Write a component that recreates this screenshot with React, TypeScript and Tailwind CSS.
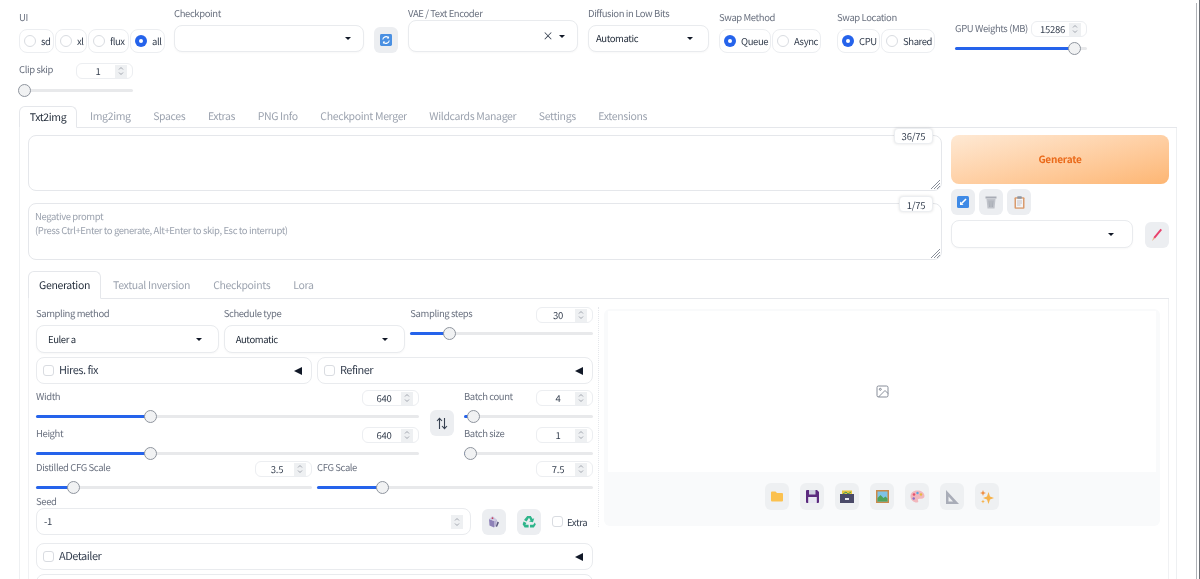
import React from "react";

const FONT = "font-['Noto_Sans_CJK_SC','Lato',sans-serif] [text-rendering:geometricPrecision]";

function Label({ children, className = "" }: { children: React.ReactNode; className?: string }) {
  return <div className={`text-[9.5px] tracking-[-0.4px] leading-[14px] text-[#6b7280] whitespace-nowrap h-[14px] ${className}`}>{children}</div>;
}

function Caret() {
  return <span className="w-0 h-0 border-x-[3.5px] border-x-transparent border-t-[3.5px] border-t-[#111827] shrink-0" />;
}

function Select({ text, className = "", pad = "px-3", clear = false }: { text?: string; className?: string; pad?: string; clear?: boolean }) {
  return (
    <div className={`flex items-center justify-between rounded-lg border border-[#e9ebee] bg-white ${pad} text-[9.5px] tracking-[-0.4px] text-[#1f2937] shadow-[0_1px_2px_rgba(0,0,0,0.03)] ${className}`}>
      <span>{text}</span>
      <span className="flex items-center gap-[6px]">
        {clear && <span className="text-[11px] leading-none text-[#374151]">×</span>}
        <Caret />
      </span>
    </div>
  );
}

function Radio({ label, on = false, className = "" }: { label: string; on?: boolean; className?: string }) {
  return (
    <div className={`flex items-center gap-[5px] h-[24px] pl-[4px] rounded-lg border border-[#eceef1] bg-white ${className}`}>
      <span className={`w-[12px] h-[12px] rounded-full flex items-center justify-center shrink-0 ${on ? "bg-[#2563eb]" : "border border-[#d9dce1] bg-white"}`}>
        {on && <span className="w-[4px] h-[4px] rounded-full bg-white" />}
      </span>
      <span className="text-[9.5px] tracking-[-0.4px] text-[#374151] pt-[1px]">{label}</span>
    </div>
  );
}

function Num({ value, className = "w-[57px]" }: { value: string; className?: string }) {
  return (
    <div className={`h-[16px] flex items-center rounded-md border border-[#eceef1] bg-white shrink-0 ${className}`}>
      <span className="flex-1 text-center pl-[4px] text-[9.5px] tracking-[-0.3px] text-[#374151] pt-[1px]">{value}</span>
      <span className="w-[12px] h-[13px] mr-[5px] bg-[#eef0f2] flex items-center justify-center">
        <Spin />
      </span>
    </div>
  );
}

function Spin() {
  return (
    <svg width="6" height="10" viewBox="0 0 6 10" fill="none" stroke="#8b919a" strokeWidth="0.8">
      <path d="M1 3.500 3 1.500 5 3.500M1 6.500 3 8.500 5 6.500" />
    </svg>
  );
}

function Slider({ pos, className = "" }: { pos: number; className?: string }) {
  return (
    <div className={`relative h-[3px] bg-[#e8e9eb] rounded ${className}`}>
      <div className="absolute left-0 top-0 h-[3px] bg-[#2563eb] rounded" style={{ width: pos }} />
      <div className="absolute top-[-5px] w-[13px] h-[13px] rounded-full border border-[#8f959e] bg-[#f1f2f3]" style={{ left: pos - 6.5 }} />
    </div>
  );
}

function SliderField({ label, value, pos, className = "", gap = "mt-[9px]" }: { label: string; value: string; pos: number; className?: string; gap?: string }) {
  return (
    <div className={className}>
      <div className="flex items-start justify-between h-[16px]">
        <Label className="-mt-[1px]">{label}</Label>
        <Num value={value} />
      </div>
      <Slider pos={pos} className={gap} />
    </div>
  );
}

function IconBtn({ children, className = "" }: { children: React.ReactNode; className?: string }) {
  return <div className={`w-[24px] h-[26px] rounded-md bg-[#eceef1] flex items-center justify-center shrink-0 ${className}`}>{children}</div>;
}

function Check({ className = "" }: { className?: string }) {
  return <span className={`w-[11px] h-[11px] rounded-[3px] border border-[#d9dce1] bg-white shrink-0 ${className}`} />;
}

function Accordion({ label, className = "" }: { label: string; className?: string }) {
  return (
    <div className={`h-[27px] flex items-center rounded-lg border border-[#e9ebee] bg-white pl-[6px] pr-[9px] ${className}`}>
      <Check />
      <span className="ml-[5px] text-[11px] tracking-[-0.5px] text-[#374151] flex-1 pb-[1px]">{label}</span>
      <span className="w-0 h-0 border-y-[4.5px] border-y-transparent border-r-[8px] border-r-[#111827]" />
    </div>
  );
}

const RefreshIcon = () => (
  <svg width="12" height="12" viewBox="0 0 13 13">
    <rect width="13" height="13" rx="1.500" fill="#4a90e2" />
    <path d="M3 6a3.500 3.500 0 0 1 6-2M10 7a3.500 3.500 0 0 1-6 2" fill="none" stroke="#fff" strokeWidth="1.200" />
    <path d="M9.800 2.200v2.600H7.200zM3.200 10.800V8.200h2.600z" fill="#fff" />
  </svg>
);
const ArrowBoxIcon = () => (
  <svg width="12" height="12" viewBox="0 0 12 12">
    <rect width="12" height="12" rx="1.500" fill="#3f8ae6" />
    <path d="M9 3 4.500 7.500" stroke="#fff" strokeWidth="1.600" />
    <path d="M3 5.500V9h3.500z" fill="#fff" />
  </svg>
);
const TrashIcon = () => (
  <svg width="12" height="13" viewBox="0 0 12 13">
    <rect x="0.500" y="0.500" width="11" height="2" fill="#a8acb5" />
    <path d="M1.500 3h9l-1 9.500h-7z" fill="#c0c3ca" />
    <path d="M4 4.500 4.500 11M6 4.500V11M8 4.500 7.500 11" stroke="#9ea3ac" strokeWidth="0.700" />
  </svg>
);
const ClipboardIcon = () => (
  <svg width="11" height="13" viewBox="0 0 11 13">
    <rect x="0.500" y="1.200" width="10" height="11.500" rx="1" fill="#d99a6c" />
    <rect x="2" y="2.600" width="7" height="8.800" fill="#f3f4f6" />
    <rect x="3.200" y="0.300" width="4.600" height="2.400" rx="0.600" fill="#8d96a3" />
    <path d="M3 5h5M3 7h5M3 9h3.500" stroke="#b2aeb4" strokeWidth="0.700" />
  </svg>
);
const PencilIcon = () => (
  <svg width="12" height="14" viewBox="0 0 12 14">
    <path d="M9.500 0.800 11 2 4 10.500 2.500 9.300z" fill="#e8416b" />
    <path d="M2.500 9.300 4 10.500 1 13z" fill="#eab08a" />
  </svg>
);
const SwapIcon = () => (
  <svg width="12" height="13" viewBox="0 0 12 13" fill="none" stroke="#374151" strokeWidth="1.100">
    <path d="M3.500 12V1.500M1 4l2.500-2.700L6 4M8.500 1v10.500M6 9l2.500 2.700L11 9" />
  </svg>
);
const DiceIcon = () => (
  <svg width="12" height="13" viewBox="0 0 12 13">
    <path d="M1 4 6 6v6.500L1.500 10.500z" fill="#8e82b8" />
    <path d="M6 6 9 4.800 8 11 6 12.500z" fill="#b9b2d4" />
    <path d="M1 4 4.500 1 9 4.800 6 6z" fill="#cfc9e2" />
    <circle cx="4.500" cy="3.200" r="0.900" fill="#c2415d" />
    <path d="M9.500 6.500 11 7.500 9 12 7.800 11.200z" fill="#5d5a80" />
  </svg>
);
const RecycleIcon = () => (
  <svg width="14" height="13" viewBox="0 0 14 13">
    <path d="M5.200 1 8.800 1 10.600 4 12.200 3.200 11 7.200 7 6.400 8.600 5.400 7 2.800 4.600 6.600 2 5z" fill="#2fb58b" />
    <path d="M1.600 6.400 4.400 8 3.400 9.800H6.600V12.400H2.600L0.600 9.200z" fill="#2fb58b" />
    <path d="M12.800 7.400 13.800 9.400 11.800 12.400H8V9.800H11.200z" fill="#2fb58b" />
  </svg>
);
const FolderIcon = () => (
  <svg width="12" height="11" viewBox="0 0 12 11">
    <path d="M0 1.500Q0 .5 1 .5H4.500L6 2H11Q12 2 12 3V9.500Q12 10.500 11 10.500H1Q0 10.500 0 9.500z" fill="#fbc14f" />
  </svg>
);
const FloppyIcon = () => (
  <svg width="13" height="13" viewBox="0 0 13 13">
    <path d="M0 1Q0 0 1 0H11L13 2V12Q13 13 12 13H1Q0 13 0 12z" fill="#5b2a7e" />
    <rect x="3" y="0" width="6.500" height="4.500" fill="#cfd0e0" />
    <rect x="2.200" y="7" width="8.600" height="6" fill="#e8e8f2" />
  </svg>
);
const BoxIcon = () => (
  <svg width="14" height="13" viewBox="0 0 14 13">
    <rect x="2" y="0.500" width="10" height="5" fill="#e6c43d" />
    <path d="M3 4 6 2l2 2 3-2" stroke="#4a9b57" fill="none" />
    <rect x="0" y="4" width="14" height="9" fill="#4a4a68" />
    <rect x="5" y="8" width="4" height="2" fill="#e8e8f0" />
  </svg>
);
const PictureIcon = () => (
  <svg width="13" height="13" viewBox="0 0 13 13">
    <rect width="13" height="13" fill="#c98a4b" />
    <rect x="1.500" y="1.500" width="10" height="10" fill="#7ec3e6" />
    <path d="M1.500 11.500V8l3-3 3 3 2-1.500 2 2v3z" fill="#4ea35a" />
  </svg>
);
const PaletteIcon = () => (
  <svg width="15" height="13" viewBox="0 0 15 13">
    <path d="M7.500 0.500C3 .5.500 3 .5 6.500S3.500 12.500 7 12.500c1.500 0 1.500-1.300 1-2-.5-1 .2-1.800 1.500-1.800h2c1.500 0 3-1 3-2.700C14.500 2.500 11 .5 7.500.5z" fill="#f1b7bd" />
    <circle cx="4" cy="4.500" r="1.300" fill="#e7506c" />
    <circle cx="7.500" cy="3" r="1.200" fill="#58a8e0" />
    <circle cx="11" cy="4.500" r="1.200" fill="#e8b940" />
    <circle cx="3.700" cy="8.500" r="1.200" fill="#8d6cc8" />
  </svg>
);
const RulerIcon = () => (
  <svg width="13" height="14" viewBox="0 0 13 14">
    <path fillRule="evenodd" d="M0 0 13 14H0zM2.500 6.500V11.500H7z" fill="#a9adb8" />
  </svg>
);
const SparkleIcon = () => (
  <svg width="14" height="14" viewBox="0 0 14 14">
    <path d="M8.500 2 10 6.500 14 8 10 9.500 8.500 14 7 9.500 3 8 7 6.500z" fill="#f6b24b" />
    <path d="M3 0l.8 2.200L6 3 3.800 3.800 3 6 2.200 3.800 0 3l2.200-.8z" fill="#f08a3c" />
    <path d="M3 9.500l.6 1.400 1.400.6-1.400.6L3 13.500l-.6-1.400-1.400-.6 1.400-.6z" fill="#f6b24b" />
  </svg>
);

const mainTabs = ["Img2img", "Spaces", "Extras", "PNG Info", "Checkpoint Merger", "Wildcards Manager", "Settings", "Extensions"];

export default function App() {
  return (
    <div className={`${FONT} w-[1200px] h-[579px] overflow-hidden bg-white relative blur-[0.3px]`}>
      <div className="absolute right-[3px] top-[3px] bottom-0 w-[1px] bg-[#b0b3b8]" />
      <div className="absolute right-0 top-0 bottom-0 w-[1px] bg-[#6b6f75]" />
      {/* top settings */}
      <div className="h-[106px] pl-[19px] flex items-start">
        <div className="w-[155px]">
          <Label className="mt-[10px]">UI</Label>
          <div className="flex gap-[1px] mt-[5px]">
            <Radio label="sd" className="w-[35px]" />
            <Radio label="xl" className="w-[32px]" />
            <Radio label="flux" className="w-[41px]" />
            <Radio label="all" on className="w-[35px]" />
          </div>
          <div className="w-[114px] mt-[10px]">
            <div className="flex items-start justify-between h-[16px]">
              <Label className="-mt-[1px]">Clip skip</Label>
              <Num value="1" />
            </div>
            <Slider pos={5} className="mt-[10px]" />
          </div>
        </div>
        <div className="w-[190px]">
          <Label className="mt-[6px]">Checkpoint</Label>
          <Select className="h-[27px] mt-[5px]" />
        </div>
        <IconBtn className="ml-[10px] mt-[27px]"><RefreshIcon /></IconBtn>
        <div className="w-[170px] ml-[10px]">
          <Label className="mt-[6px]">VAE / Text Encoder</Label>
          <Select clear className="h-[32px]" />
        </div>
        <div className="w-[121px] ml-[10px]">
          <Label className="mt-[6px]">Diffusion in Low Bits</Label>
          <Select text="Automatic" className="h-[27px] mt-[5px]" pad="px-[7px] pr-[15px]" />
        </div>
        <div className="ml-[10px]">
          <Label className="mt-[10px]">Swap Method</Label>
          <div className="flex gap-[1px] mt-[5px]">
            <Radio label="Queue" on className="w-[52px]" />
            <Radio label="Async" className="w-[49px]" />
          </div>
        </div>
        <div className="ml-[16px]">
          <Label className="mt-[10px]">Swap Location</Label>
          <div className="flex gap-[1px] mt-[5px]">
            <Radio label="CPU" on className="w-[43px]" />
            <Radio label="Shared" className="w-[54px]" />
          </div>
        </div>
        <div className="w-[132px] ml-[20px] mt-[21px]">
          <div className="flex items-start justify-between h-[16px]">
            <Label>GPU Weights (MB)</Label>
            <Num value="15286" className="w-[56px]" />
          </div>
          <Slider pos={119} className="mt-[10px]" />
        </div>
      </div>

      {/* main tabs */}
      <div className="ml-[19px] w-[1158px] h-[22px] flex items-end border-b border-[#e5e7eb] text-[10.5px] tracking-[-0.35px] text-[#9ca3af]">
        <div className="h-[22px] w-[58px] -mb-[1px] flex items-center justify-center rounded-t-md border border-[#e5e7eb] border-b-white bg-white text-[#1f2937] pt-[1px]">Txt2img</div>
        <div className="flex items-center h-[21px] pl-[13px] gap-[22.5px] pt-[1px]">
          {mainTabs.map((t) => (
            <span key={t} className="whitespace-nowrap">{t}</span>
          ))}
        </div>
      </div>

      {/* main panel */}
      <div className="ml-[19px] w-[1158px] border-x border-[#eef0f2] pt-[7px] pl-[8px] pr-[8px] relative">
        <div className="flex">
          <div className="w-[914px] shrink-0">
            <div className="relative h-[56px] rounded-lg border border-[#e5e7eb] bg-white">
              <div className="absolute right-[8px] top-[-8px] w-[39px] h-[16px] rounded-sm border border-[#eceef1] bg-white shadow-[0_0_3px_rgba(0,0,0,0.12)] flex items-center justify-center text-[9.5px] tracking-[-0.2px] text-[#374151] pt-[1px]">36/75</div>
              <Grip />
            </div>
            <div className="relative h-[57px] mt-[12px] rounded-lg border border-[#e5e7eb] bg-white pl-[6px] pt-[5px] text-[9.5px] tracking-[-0.4px] leading-[14px] text-[#9ca3af]">
              Negative prompt
              <br />
              (Press Ctrl+Enter to generate, Alt+Enter to skip, Esc to interrupt)
              <div className="absolute right-[8px] top-[-8px] w-[34px] h-[16px] rounded-sm border border-[#eceef1] bg-white shadow-[0_0_3px_rgba(0,0,0,0.12)] flex items-center justify-center text-[9.5px] tracking-[-0.2px] text-[#374151] pt-[1px]">1/75</div>
              <Grip />
            </div>
          </div>
          <div className="ml-[9px] w-[218px]">
            <div className="h-[49px] rounded-lg bg-gradient-to-br from-[#fee9d4] to-[#fdb673] flex items-center justify-center text-[10px] tracking-[-0.2px] font-bold text-[#ea6a1a] pb-[2px]">Generate</div>
            <div className="flex gap-[4px] mt-[5px]">
              <IconBtn><ArrowBoxIcon /></IconBtn>
              <IconBtn><TrashIcon /></IconBtn>
              <IconBtn><ClipboardIcon /></IconBtn>
            </div>
            <div className="flex mt-[5px] items-end">
              <Select className="w-[182px] h-[28px]" pad="pl-3 pr-[18px]" />
              <IconBtn className="ml-[12px]"><PencilIcon /></IconBtn>
            </div>
          </div>
        </div>

        {/* sub tabs */}
        <div className="mt-[11px] h-[28px] w-[1141px] flex items-end border-b border-[#e5e7eb] text-[10.5px] tracking-[-0.35px] text-[#9ca3af]">
          <div className="h-[28px] w-[73px] -mb-[1px] flex items-center justify-center rounded-t-md border border-[#e5e7eb] border-b-white bg-white text-[#1f2937] pt-[2px]">Generation</div>
          <div className="flex items-center h-[27px] pl-[12px] gap-[23px] pt-[2px]">
            <span>Textual Inversion</span>
            <span>Checkpoints</span>
            <span>Lora</span>
          </div>
        </div>

        <div className="w-[1141px] h-[300px] border-x border-[#f0f1f3] flex pl-[7px] pt-[8px]">
          {/* left column */}
          <div className="w-[557px] shrink-0">
            <div className="flex gap-[5px] h-[47px]">
              <div className="w-[183px]">
                <Label className="-mt-[1px]">Sampling method</Label>
                <Select text="Euler a" className="h-[28px] mt-[5px]" pad="pl-[11px] pr-[16px]" />
              </div>
              <div className="w-[182px]">
                <Label className="-mt-[1px]">Schedule type</Label>
                <Select text="Automatic" className="h-[28px] mt-[5px]" pad="pl-[11px] pr-[16px]" />
              </div>
              <SliderField label="Sampling steps" value="30" pos={39} className="w-[183px]" />
            </div>
            <div className="flex gap-[5px] mt-[3px]">
              <Accordion label="Hires. fix" className="w-[276px]" />
              <Accordion label="Refiner" className="w-[276px]" />
            </div>
            <div className="flex mt-[6px] h-[71px]">
              <div className="w-[383px]">
                <SliderField label="Width" value="640" pos={114} />
                <SliderField label="Height" value="640" pos={114} className="mt-[9px]" />
              </div>
              <div className="w-[45px] flex justify-center pt-[20px]">
                <IconBtn><SwapIcon /></IconBtn>
              </div>
              <div className="w-[129px]">
                <SliderField label="Batch count" value="4" pos={9} />
                <SliderField label="Batch size" value="1" pos={6} className="mt-[9px]" />
              </div>
            </div>
            <div className="flex gap-[5px]">
              <SliderField label="Distilled CFG Scale" value="3.5" pos={37} className="w-[276px]" />
              <SliderField label="CFG Scale" value="7.5" pos={65} className="w-[276px]" />
            </div>
            <Label className="mt-[5px]">Seed</Label>
            <div className="flex items-center">
              <div className="w-[435px] h-[27px] rounded-lg border border-[#e9ebee] bg-white flex items-center justify-between pl-[7px] pr-[7px] text-[9.5px] tracking-[-0.3px] text-[#374151]">
                <span>-1</span>
                <span className="w-[12px] h-[14px] bg-[#eef0f2] flex items-center justify-center"><Spin /></span>
              </div>
              <IconBtn className="ml-[11px]"><DiceIcon /></IconBtn>
              <IconBtn className="ml-[11px]"><RecycleIcon /></IconBtn>
              <Check className="ml-[11px]" />
              <span className="ml-[4px] text-[9.5px] tracking-[-0.4px] text-[#374151] pt-[1px]">Extra</span>
            </div>
            <Accordion label="ADetailer" className="mt-[8px]" />
            <div className="mt-[4px] h-[27px] rounded-lg border border-[#e9ebee] bg-white" />
          </div>
          {/* dotted divider */}
          <div className="w-0 ml-[5px] h-[220px] border-l border-dotted border-[#e5e7eb]" />
          {/* gallery */}
          <div className="ml-[5px] w-[556px] h-[217px] mt-[2px] rounded-md bg-[#f9fafb] shrink-0 flex flex-col">
            <div className="mx-[4px] mt-[2px] h-[161px] bg-white flex items-center justify-center shrink-0">
              <svg width="13" height="13" viewBox="0 0 13 13" fill="none" stroke="#6b7280" strokeWidth="0.8">
                <rect x="1" y="1" width="11" height="11" rx="1.500" />
                <circle cx="4.300" cy="4.300" r="1" />
                <path d="M12 8.500 9 5.500 2.500 12" />
              </svg>
            </div>
            <div className="flex justify-center gap-[11px] mt-[11px]">
              <IconBtn className="bg-[#eef0f2] h-[27px]"><FolderIcon /></IconBtn>
              <IconBtn className="bg-[#eef0f2] h-[27px]"><FloppyIcon /></IconBtn>
              <IconBtn className="bg-[#eef0f2] h-[27px]"><BoxIcon /></IconBtn>
              <IconBtn className="bg-[#eef0f2] h-[27px]"><PictureIcon /></IconBtn>
              <IconBtn className="bg-[#eef0f2] h-[27px]"><PaletteIcon /></IconBtn>
              <IconBtn className="bg-[#eef0f2] h-[27px]"><RulerIcon /></IconBtn>
              <IconBtn className="bg-[#eef0f2] h-[27px]"><SparkleIcon /></IconBtn>
            </div>
          </div>
        </div>
      </div>
    </div>
  );
}

function Grip() {
  return (
    <svg className="absolute right-0 bottom-0" width="11" height="11" viewBox="0 0 11 11" stroke="#6b7280" strokeWidth="0.8">
      <path d="M10 1 1 10M10 4 4 10M10 7 7 10" />
    </svg>
  );
}
